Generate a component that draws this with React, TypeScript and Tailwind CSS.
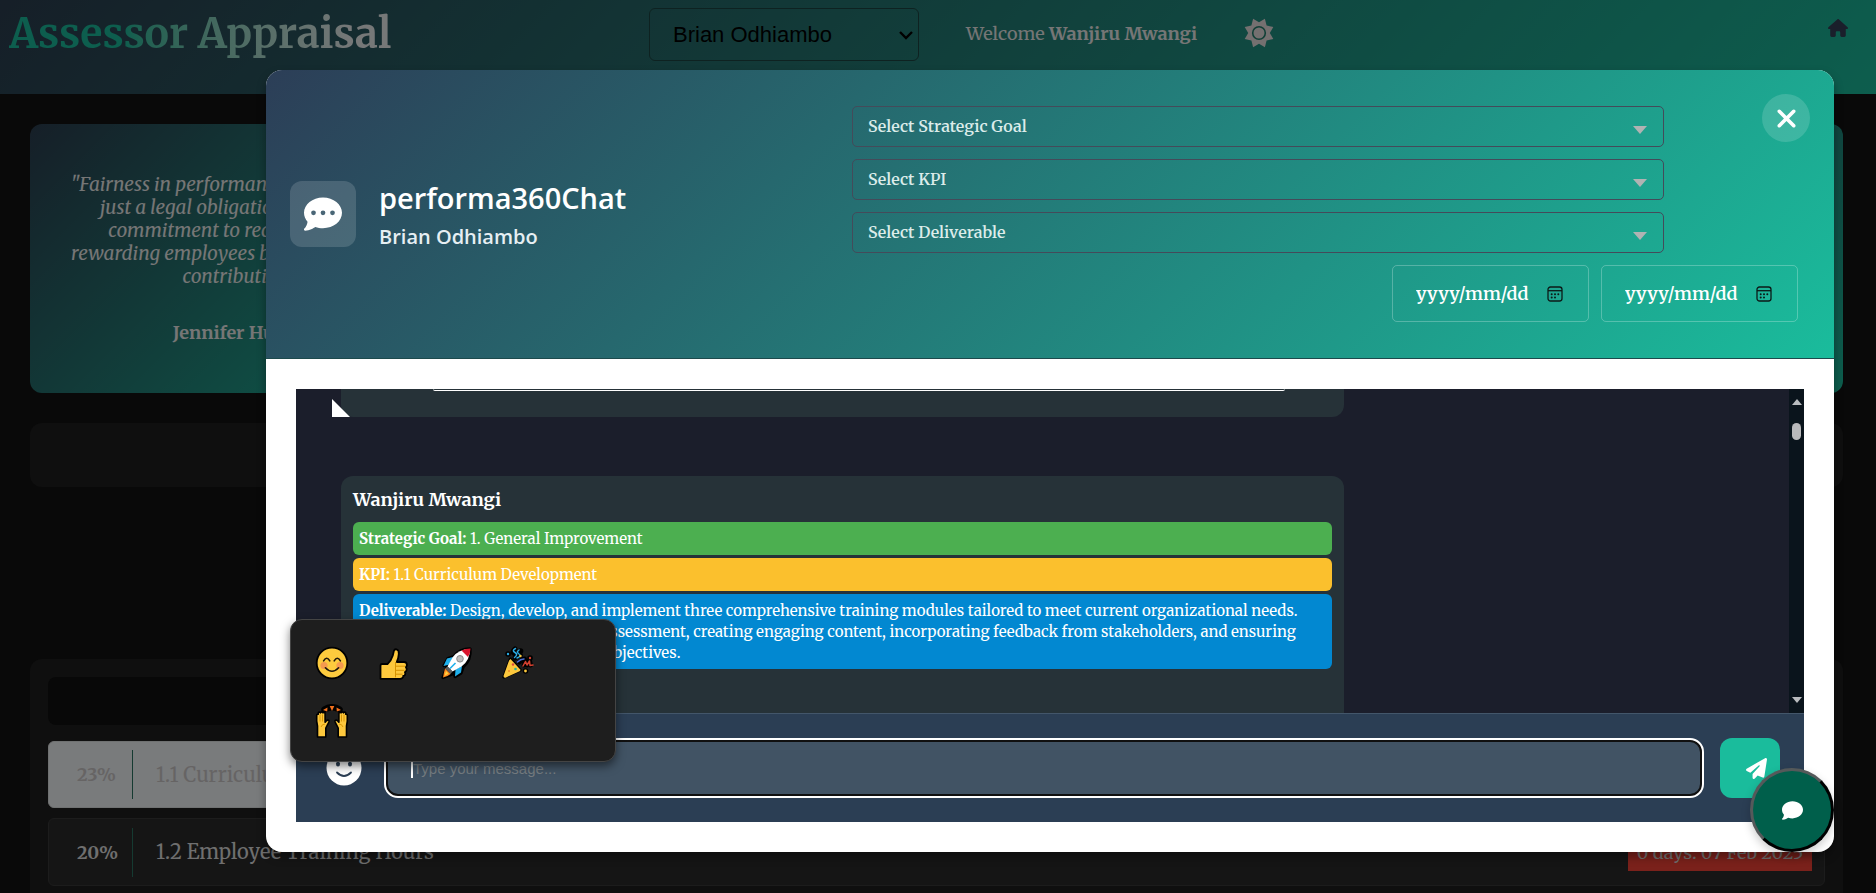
import React from "react";
import { FaCommentDots, FaComment, FaPaperPlane, FaXmark, FaHouse } from "react-icons/fa6";

const serif = "font-['Merriweather','Noto_Serif',serif]";
const arial = "font-['Liberation_Sans',Arial,sans-serif]";
const humanist = "font-['Open_Sans','Noto_Sans',sans-serif]";

function SunGlyph() {
  return (
    <svg viewBox="-16 -16 32 32" className="size-8">
      <path
        fill="currentColor"
        d="M5.900 -14.300L7.600 -7.600L14.300 -5.900L10.800 0L14.300 5.900L7.600 7.600L5.900 14.300L0 10.800L-5.900 14.300L-7.600 7.600L-14.300 5.900L-10.800 0L-14.300 -5.900L-7.600 -7.600L-5.900 -14.300L0 -10.800Z"
      />
      <circle r="6.300" fill="none" stroke="#217f6d" strokeWidth="1.600" />
    </svg>
  );
}

function TopBar() {
  return (
    <header className="flex h-[94px] items-start bg-[linear-gradient(135deg,#2c3e50,#1abc9c)] pt-2 pr-7 pl-[9px]">
      <div className="w-[640px] shrink-0">
        <h1 className="inline-block bg-gradient-to-r from-[#1abc9c] from-30% to-[#ecf0f1] to-90% bg-clip-text text-[41px] leading-[52px] font-bold whitespace-nowrap text-transparent">
          Assessor Appraisal
        </h1>
      </div>
      <div className="relative w-[270px] shrink-0">
        <select
          aria-label="Employee"
          className={`${arial} h-[53px] w-full appearance-none rounded-md border border-[#1c4442] bg-transparent px-[23px] text-[22px] text-black`}
        >
          <option>Brian Odhiambo</option>
        </select>
        <svg viewBox="0 0 14 9" className="pointer-events-none absolute top-[23px] right-[6px] h-[9px] w-[14px]" fill="none" stroke="#000" strokeWidth="2.4">
          <path d="M1 1l6 6 6-6" />
        </svg>
      </div>
      <p className="ml-[47px] text-[18px] leading-[52px] whitespace-nowrap text-[#ececec]">
        Welcome <b>Wanjiru Mwangi</b>
      </p>
      <button aria-label="Toggle theme" className="ml-[46px] flex h-[50px] items-center text-[#e8e0e0]">
        <SunGlyph />
      </button>
      <a href="#home" aria-label="Home" className="mt-[10px] ml-auto text-[#353f56]">
        <FaHouse size={20} />
      </a>
    </header>
  );
}

const quotes = [
  {
    lines: [
      '"Fairness in performance appraisal is not',
      "just a legal obligation, but a moral",
      "commitment to recognizing and",
      "rewarding employees based on their true",
      'contributions."',
    ],
    author: "Jennifer Hudson",
  },
  { lines: [], author: "" },
  { lines: [], author: "" },
  { lines: [], author: "" },
];

function Quotes() {
  return (
    <section className="grid grid-cols-4 gap-[30px]">
      {quotes.map((q, i) => (
        <figure
          key={i}
          className="flex h-[269px] flex-col items-center justify-center gap-[33px] rounded-xl bg-[linear-gradient(135deg,#2c3e50,#1abc9c)] text-center text-[18px] leading-[23px] text-[#ececec]"
        >
          <blockquote className="text-[19px] italic">
            {q.lines.map((line) => (
              <span key={line} className="block whitespace-nowrap">
                {line}
              </span>
            ))}
          </blockquote>
          {q.author && <figcaption className="font-bold">{q.author}</figcaption>}
        </figure>
      ))}
    </section>
  );
}

function KpiList() {
  return (
    <section className="mt-[172px] flex h-[260px] flex-col rounded-xl bg-[#1e1e1e] p-[18px]">
      <div className="mb-4 h-12 shrink-0 rounded-lg bg-[#101010]" />
      <div className="mb-[10px] flex h-[67px] shrink-0 items-center rounded-md border border-[#dfe2e3] bg-[#f2f6f9] text-[20px] text-[#cdc9c9]">
        <b className="w-[83px] pl-[28px] text-[18px]">23%</b>
        <span className="h-[49px] w-px bg-[#2a7562]" />
        <span className="pl-[23px]">1.1 Curriculum Development</span>
      </div>
      <div className="flex h-[68px] shrink-0 items-center rounded-md border border-[#383838] bg-[#2b2b2b] pr-3 text-[20px] text-[#dedede]">
        <b className="w-[83px] pl-[28px] text-[18px]">20%</b>
        <span className="h-[49px] w-px bg-[#2a7562]" />
        <span className="pl-[23px]">1.2 Employee Training Hours</span>
        <span className="ml-auto flex h-[38px] w-[184px] items-center justify-center bg-[#f44336] text-[18px] text-[#dedede]">
          0 days: 07 Feb 2025
        </span>
      </div>
    </section>
  );
}

function FilterSelect({ label }: { label: string }) {
  return (
    <div className="relative mr-[134px]">
      <select
        aria-label={label}
        className="h-[41px] w-full appearance-none rounded-[5px] border border-[#444b5a] bg-transparent px-[15px] pb-[2px] text-[16px] font-semibold text-[#dcecea]"
      >
        <option>{label}</option>
      </select>
      <svg viewBox="0 0 14 8" className="pointer-events-none absolute top-[20px] right-[17px] h-2 w-[14px]" fill="#b0b3b3">
        <path d="M0 0h14L7 8z" />
      </svg>
    </div>
  );
}

function CalendarGlyph() {
  return (
    <svg viewBox="0 0 16 16" className="h-4 w-4" fill="none" stroke="#0c1a18" strokeWidth="1.3">
      <rect x="1" y="1" width="14" height="14" rx="2.5" />
      <path d="M1 4.7h14" />
      <g fill="#0c1a18" stroke="none">
        <circle cx="4.7" cy="8.3" r="1" />
        <circle cx="8" cy="8.3" r="1" />
        <circle cx="11.3" cy="8.3" r="1" />
        <circle cx="4.7" cy="11.5" r="1" />
        <circle cx="8" cy="11.5" r="1" />
      </g>
    </svg>
  );
}

function DateField({ label }: { label: string }) {
  return (
    <div className="flex h-[57px] w-[197px] items-center rounded-[5px] border border-white/25 pr-[25px] pl-[23px]">
      <input
        type="text"
        aria-label={label}
        placeholder="yyyy/mm/dd"
        className="w-full min-w-0 bg-transparent text-[18px] font-semibold text-white outline-none placeholder:text-white"
      />
      <button aria-label={`Pick ${label}`} className="shrink-0">
        <CalendarGlyph />
      </button>
    </div>
  );
}

function ModalHeader() {
  return (
    <div className="relative grid min-h-[289px] grid-cols-[562fr_946fr] items-center border-b border-[#1d4a4c] bg-[linear-gradient(135deg,#2c3e57,#1abc9c)] pr-9 pl-6">
      <div className="flex items-center gap-[23px]">
        <div className="flex size-[66px] shrink-0 items-center justify-center rounded-xl bg-white/15 text-white">
          <FaCommentDots size={38} />
        </div>
        <div className={`${humanist} pt-1`}>
          <h2 className="text-[29px] leading-[42px] font-semibold text-white">performa360Chat</h2>
          <p className="text-[20px] leading-[36px] font-semibold text-[#e6eff3]">Brian Odhiambo</p>
        </div>
      </div>
      <div className="flex flex-col gap-3">
        <FilterSelect label="Select Strategic Goal" />
        <FilterSelect label="Select KPI" />
        <FilterSelect label="Select Deliverable" />
        <div className="flex justify-end gap-3">
          <DateField label="start date" />
          <DateField label="end date" />
        </div>
      </div>
      <button aria-label="Close" className="absolute top-6 right-6 flex size-12 items-center justify-center rounded-full bg-white/15 text-white">
        <FaXmark size={29} />
      </button>
    </div>
  );
}

const tags = [
  { label: "Strategic Goal:", text: "1. General Improvement", color: "bg-[#4caf50]" },
  { label: "KPI:", text: "1.1 Curriculum Development", color: "bg-[#fbc02d]" },
  {
    label: "Deliverable:",
    text: "Design, develop, and implement three comprehensive training modules tailored to meet current organizational needs. This includes conducting a needs assessment, creating engaging content, incorporating feedback from stakeholders, and ensuring alignment with all organizational objectives.",
    color: "bg-[#0288d1]",
  },
];

function Messages() {
  return (
    <div className="flex min-h-0 flex-1 bg-[#1b1e2b]">
      <div className="flex min-w-0 flex-1 flex-col overflow-hidden pr-[445px] pl-[45px]">
        <div className="relative h-7 shrink-0 rounded-b-xl bg-[#263238]">
          <div className="mr-[59px] ml-[92px] h-[2px] rounded-b-[3px] border-b border-white bg-[#263238]" />
          <svg viewBox="0 0 18 18" className="absolute bottom-0 -left-[9px] size-[18px]" fill="#fff">
            <path d="M0 0l18 18H0z" />
          </svg>
        </div>
        <article className="mt-[59px] flex h-[280px] shrink-0 flex-col gap-[3px] rounded-xl bg-[#263238] p-3 text-[15px] leading-[21px] text-white">
          <h3 className="mb-[7px] text-[18px] leading-6 font-bold">Wanjiru Mwangi</h3>
          {tags.map((t) => (
            <p key={t.label} className={`rounded-md p-[6px] ${t.color}`}>
              <b>{t.label}</b> {t.text}
            </p>
          ))}
        </article>
      </div>
      <div className="flex w-[15px] shrink-0 flex-col items-center bg-[#0a141c] pt-[10px] pb-[10px]" aria-hidden="true">
        <svg viewBox="0 0 10 6" className="h-[6px] w-[10px]" fill="#b9bcbf">
          <path d="M5 0l5 6H0z" />
        </svg>
        <div className="mt-[18px] h-[17px] w-[9px] rounded-full bg-[#b9b9bb]" />
        <svg viewBox="0 0 10 6" className="mt-auto h-[6px] w-[10px]" fill="#b9bcbf">
          <path d="M5 6l5-6H0z" />
        </svg>
      </div>
    </div>
  );
}

function Composer() {
  return (
    <div className="flex items-center border-t border-[#43566a] bg-[#2b3e54] py-6 pr-6 pl-[30px]">
      <button aria-label="Emoji" className="shrink-0">
        <svg viewBox="0 0 36 36" className="size-9">
          <circle cx="18" cy="18" r="17.5" fill="#fff" />
          <g fill="#2b3e54">
            <ellipse cx="12" cy="14" rx="2" ry="2.6" />
            <ellipse cx="24" cy="14" rx="2" ry="2.6" />
          </g>
          <path d="M11 22.5q7 7 14 0" fill="none" stroke="#2b3e54" strokeWidth="1.8" strokeLinecap="round" />
        </svg>
      </button>
      <div className="ml-[22px] flex h-[60px] min-w-0 flex-1 items-center rounded-[14px] border-2 border-white bg-[#101010] p-[2px]">
        <div className="flex h-full min-w-0 flex-1 items-center rounded-[10px] bg-[#415364] pl-[23px]">
          <span className="h-5 w-[2px] bg-white" />
          <input
            type="text"
            aria-label="Message"
            placeholder="Type your message..."
            className={`${arial} h-full min-w-0 flex-1 bg-transparent text-[15px] text-white outline-none placeholder:text-[#757c80]`}
          />
        </div>
      </div>
      <button aria-label="Send" className="ml-4 flex size-[60px] shrink-0 items-center justify-end rounded-xl bg-[#1abc9c] pr-[13px] text-white">
        <FaPaperPlane size={21} />
      </button>
    </div>
  );
}

function Smile() {
  return (
    <svg viewBox="0 0 34 34" className="size-[34px]">
      <circle cx="17" cy="17" r="15.3" fill="#fdcb3e" stroke="#000" strokeWidth="1.8" />
      <circle cx="9" cy="19.5" r="3.6" fill="#f59a4f" />
      <circle cx="25" cy="19.5" r="3.6" fill="#f59a4f" />
      <g fill="none" stroke="#20180c" strokeWidth="1.6" strokeLinecap="round">
        <path d="M8.6 14.8q3.1-5.2 6.2 0M19.2 14.8q3.1-5.2 6.2 0M10.4 21.8q6.6 7 13.2 0" />
      </g>
    </svg>
  );
}

function ThumbsUp() {
  return (
    <svg viewBox="0 0 34 34" className="size-[34px]">
      <path
        d="M3.5 19.5q0-1.5 1.5-1.5h5.5q3.8-3.4 5.3-8.5l1.1-4.6q.7-2 2.6-1.6 2.6.7 2.3 4.4-.3 4.6-2 8.3h7.4q2.6.3 2.7 2.8 0 1.6-1 2.4 1 1.2.7 2.8-.4 1.6-1.7 2 .8 1.4.2 2.6-.6 1.3-1.9 1.4.2 1.300-.8 2-1 .8-2.400.8H3.500z"
        fill="#fdc83d"
        stroke="#000"
        strokeWidth="1.8"
        strokeLinejoin="round"
      />
      <path d="M18.5 16v15.3M19 20.2h9M19 24.3h8.5M19 28.2h6.5" fill="none" stroke="#d69200" strokeWidth="1" />
    </svg>
  );
}

function Rocket() {
  return (
    <svg viewBox="0 0 34 34" className="size-[34px]">
      <g stroke="#000" strokeWidth="3.4" strokeLinejoin="round">
        <path d="M31 3q-10 0-16 7.500l-6 2-4 7 4.500-.5-2 3.500-3.500 9 9.500-3.500 3-2-.5 4.500 6-3.500 2-6Q32 14 31 3z" fill="#000" />
      </g>
      <path d="M14 11l-6 1.500L4.500 20l6-1.500zM23 20l-1 6.500-6 4 .5-7z" fill="#1fb0ec" />
      <path d="M31 3Q19.500 3 13.500 11.500L8.500 20.500l5 5 9-5Q31 14.500 31 3z" fill="#fff" />
      <path d="M31.500 2.500q-5 0-9 2L29 11Q31.500 7 31.500 2.500z" fill="#d9132c" />
      <circle cx="21" cy="12.8" r="3.3" fill="#bdbdbd" stroke="#8b8b8b" />
      <path d="M16.5 17l-5.500 5.500" stroke="#1fb0ec" strokeWidth="1.6" />
      <path d="M8.5 20.5l5 5-2 2.500-5.500-5.500z" fill="#5d5d5d" />
      <path d="M6 22.5l5.500 5.500-3 2L4 31.500l1-5z" fill="#ff8a1f" />
      <path d="M7 25l2.500 2.500-4 2.500z" fill="#ffd23e" />
    </svg>
  );
}

function Party() {
  return (
    <svg viewBox="0 0 34 34" className="size-[34px]">
      <g fill="none" stroke="#000" strokeLinecap="round" strokeLinejoin="round">
        <path d="M14 3q-4 3 0 5t0 4M18.500 16q2-2.500 5-3M23 19l2-4 1 4 2.500-4 1 4" strokeWidth="5" />
        <path d="M9.5 13L3 31l16-7z" strokeWidth="3.4" fill="#000" />
        <path d="M7 8h.1M19 9h.1M29 12h.1M24.5 25h.1M19.5 5h.1" strokeWidth="5.5" />
      </g>
      <path d="M9.5 13Q8 14 7.500 16L2.500 30q0 2 2 1.700l13-6q2-.7 2-2z" fill="#fdc83d" />
      <g fill="none" strokeWidth="1.5" strokeLinecap="round" strokeLinejoin="round">
        <path d="M14.500 2.500q-4 2-.5 4t-.5 5M18 4q-3 2 0 4t-2 4" stroke="#29a9e1" />
        <path d="M16.500 16q3-3 6.500-3" stroke="#4b6fd6" />
        <path d="M22 20l2.500-4.500L26 19l2.500-4 .5 4.500 3-.5" stroke="#d1402f" />
      </g>
      <g>
        <circle cx="7" cy="8" r="1.200" fill="#29a9e1" />
        <circle cx="19.500" cy="10" r="1.200" fill="#fdc83d" />
        <circle cx="29" cy="12" r="1.200" fill="#d1402f" />
        <circle cx="24.500" cy="25" r="1.400" fill="#fdc83d" />
        <circle cx="12" cy="18.500" r="1.200" fill="#e1493a" />
        <circle cx="14.500" cy="23" r="1.300" fill="#2fb39a" />
        <circle cx="8" cy="25" r="1" fill="#f08a2e" />
      </g>
    </svg>
  );
}

function RaisedHands() {
  const hand =
    "M2.500 33V22Q1.300 18 1.700 11.500 2 10 3.200 10.300V9q1-1.600 2.200-.2 1.200-1.800 2.500 0 1.700-1 2.200.8v8.600q2-2.800 3.700-1.700.8.600-.2 2.200L10.800 24v9z";
  return (
    <svg viewBox="0 0 34 34" className="size-[34px]">
      <path d="M9.500 5.500q7.500-4.500 15 0" fill="none" stroke="#000" strokeWidth="6.500" strokeLinecap="round" />
      <g fill="#f2701d">
        <path d="M8 6l4.500-2.500-.3 4zM26 6l-4.500-2.500.3 4zM14.700 2h4.600L17 7z" />
      </g>
      <g fill="#fdc83d" stroke="#000" strokeWidth="1.600" strokeLinejoin="round">
        <path d={hand} />
        <path d={hand} transform="matrix(-1 0 0 1 34 0)" />
      </g>
      <g fill="none" stroke="#d69200" strokeWidth=".9">
        <path d="M5 10.500v7M7.500 10.500v7M26.500 10.500v7M29 10.500v7M6 23q1-3 4-3M28 23q-1-3-4-3" />
      </g>
    </svg>
  );
}

const emojis = [
  { name: "Smile", Icon: Smile },
  { name: "Thumbs up", Icon: ThumbsUp },
  { name: "Rocket", Icon: Rocket },
  { name: "Party", Icon: Party },
  { name: "Raised hands", Icon: RaisedHands },
];

function EmojiPicker() {
  return (
    <div className="absolute bottom-[90px] left-6 grid w-[326px] grid-cols-[62px_62px_62px_62px] gap-y-6 rounded-xl border border-[#444] bg-[#1e1e1e] pt-[26px] pb-[23px] pl-6 shadow-[0_4px_10px_rgba(0,0,0,0.5)]">
      {emojis.map(({ name, Icon }) => (
        <button key={name} aria-label={name} className="w-[34px]">
          <Icon />
        </button>
      ))}
    </div>
  );
}

export default function App() {
  return (
    <div className={`${serif} relative h-screen overflow-hidden bg-[#121212]`}>
      <TopBar />
      <main className="pt-[30px] pr-[33px] pl-[30px]">
        <Quotes />
        <div className="mt-[30px] h-16 rounded-xl bg-[#1e1e1e]" />
        <KpiList />
      </main>

      <div className="absolute inset-0 flex bg-black/50 pt-[70px] pr-[42px] pb-[41px] pl-[266px]">
        <div role="dialog" aria-label="Chat" className="relative flex min-w-0 flex-1 flex-col rounded-2xl bg-white shadow-[0_5px_10px_rgba(0,0,0,0.35)]">
          <div className="overflow-hidden rounded-t-2xl">
            <ModalHeader />
          </div>
          <div className="flex min-h-0 flex-1 flex-col p-[30px]">
            <Messages />
            <Composer />
          </div>
          <EmojiPicker />
          <button
            aria-label="Open chat"
            className="absolute right-0 bottom-0 flex size-[84px] items-center justify-center rounded-full border-[3px] border-t-[#55595a] border-r-black border-b-black border-l-[#55595a] bg-[#005f4b] text-white shadow-[0_4px_10px_rgba(0,0,0,0.2)]"
          >
            <FaComment size={21} />
          </button>
        </div>
      </div>
    </div>
  );
}
